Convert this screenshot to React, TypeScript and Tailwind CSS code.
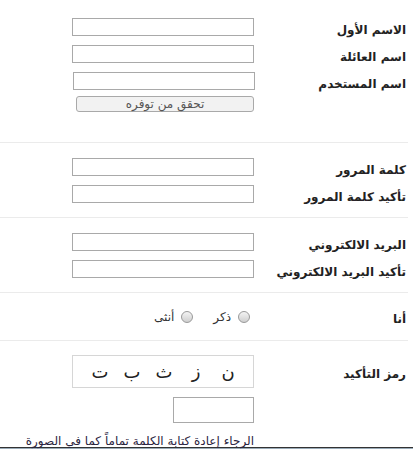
import React from 'react';

const fieldRow = (label: string, offset = false) => (
  <div className="flex h-[18px] items-center mb-[9px]">
    <div className="w-[154px] pr-[2px] text-[12px] font-bold text-[#222] leading-none pt-[5px]">{label}</div>
    <input
      type="text"
      className={`w-[182px] h-[18px] border border-[#a9a9a9] bg-white ${offset ? '-mr-px' : ''}`}
    />
  </div>
);

function Separator() {
  return <div className="h-px w-[408px] bg-[#ebebeb]" />;
}

export default function App() {
  return (
    <div
      dir="rtl"
      className="w-[414px] h-[450px] overflow-hidden bg-white text-[#222]"
      style={{ fontFamily: '"DejaVu Sans", sans-serif' }}
    >
      <div className="w-[408px] ml-0 mr-auto">
        {/* names */}
        <div className="pt-[18px]">
          {fieldRow('الاسم الأول')}
          {fieldRow('اسم العائلة')}
          {fieldRow('اسم المستخدم', true)}
          <div className="flex -mt-[3px]">
            <div className="w-[154px]" />
            <button
              type="button"
              className="w-[178px] h-[16px] rounded-[3px] border border-[#a9a9a9] bg-[#f2f2f2] text-[12px] leading-none text-[#555]"
            >
              تحقق من توفره
            </button>
          </div>
        </div>
        <div className="mt-[30px]">
          <Separator />
        </div>

        {/* password */}
        <div className="pt-[15px] pb-[5px]">
          {fieldRow('كلمة المرور')}
          {fieldRow('تأكيد كلمة المرور')}
        </div>
        <Separator />

        {/* email */}
        <div className="pt-[15px] pb-[5px]">
          {fieldRow('البريد الالكتروني')}
          {fieldRow('تأكيد البريد الالكتروني')}
        </div>
        <Separator />

        {/* gender */}
        <div className="flex h-[47px] items-center">
          <div className="w-[154px] pr-[2px] text-[12px] font-bold leading-none pt-[5px]">أنا</div>
          <label className="flex items-center mr-[4px] text-[12px] text-[#333]">
            <span className="w-[12px] h-[12px] rounded-full border border-[#999] bg-gradient-to-b from-[#f4f4f4] to-[#cfcfcf]" />
            <span className="mr-[7px]">ذكر</span>
          </label>
          <label className="flex items-center mr-[20px] text-[12px] text-[#333]">
            <span className="w-[12px] h-[12px] rounded-full border border-[#999] bg-gradient-to-b from-[#f4f4f4] to-[#cfcfcf]" />
            <span className="mr-[7px]">أنثى</span>
          </label>
        </div>
        <Separator />

        {/* captcha */}
        <div className="pt-[14px]">
          <div className="flex items-center">
            <div className="w-[154px] pr-[2px] text-[12px] font-bold leading-none pt-[4px]">رمز التأكيد</div>
            <div className="flex w-[182px] h-[33px] items-center border border-[#d6d6d6] pr-[9px] text-[18px] text-[#222]">
              {['ن', 'ز', 'ث', 'ب', 'ت'].map((c) => (
                <span key={c} className="w-[32px] text-center leading-none">
                  {c}
                </span>
              ))}
            </div>
          </div>
          <div className="flex mt-[9px]">
            <div className="w-[154px]" />
            <input type="text" className="w-[81px] h-[26px] border border-[#a9a9a9] bg-white" />
          </div>
          <div className="flex h-[24px] items-end">
            <div className="w-[154px] shrink-0" />
            <div className="whitespace-nowrap text-[12px] leading-[15px] text-[#2a2440] translate-y-[2px]">
              الرجاء إعادة كتابة الكلمة تماماً كما في الصورة
            </div>
          </div>
        </div>
      </div>
      <div className="w-[413px] border-t border-[#333] h-[2px] bg-[#9aabb8] ml-auto mr-px" />
    </div>
  );
}
